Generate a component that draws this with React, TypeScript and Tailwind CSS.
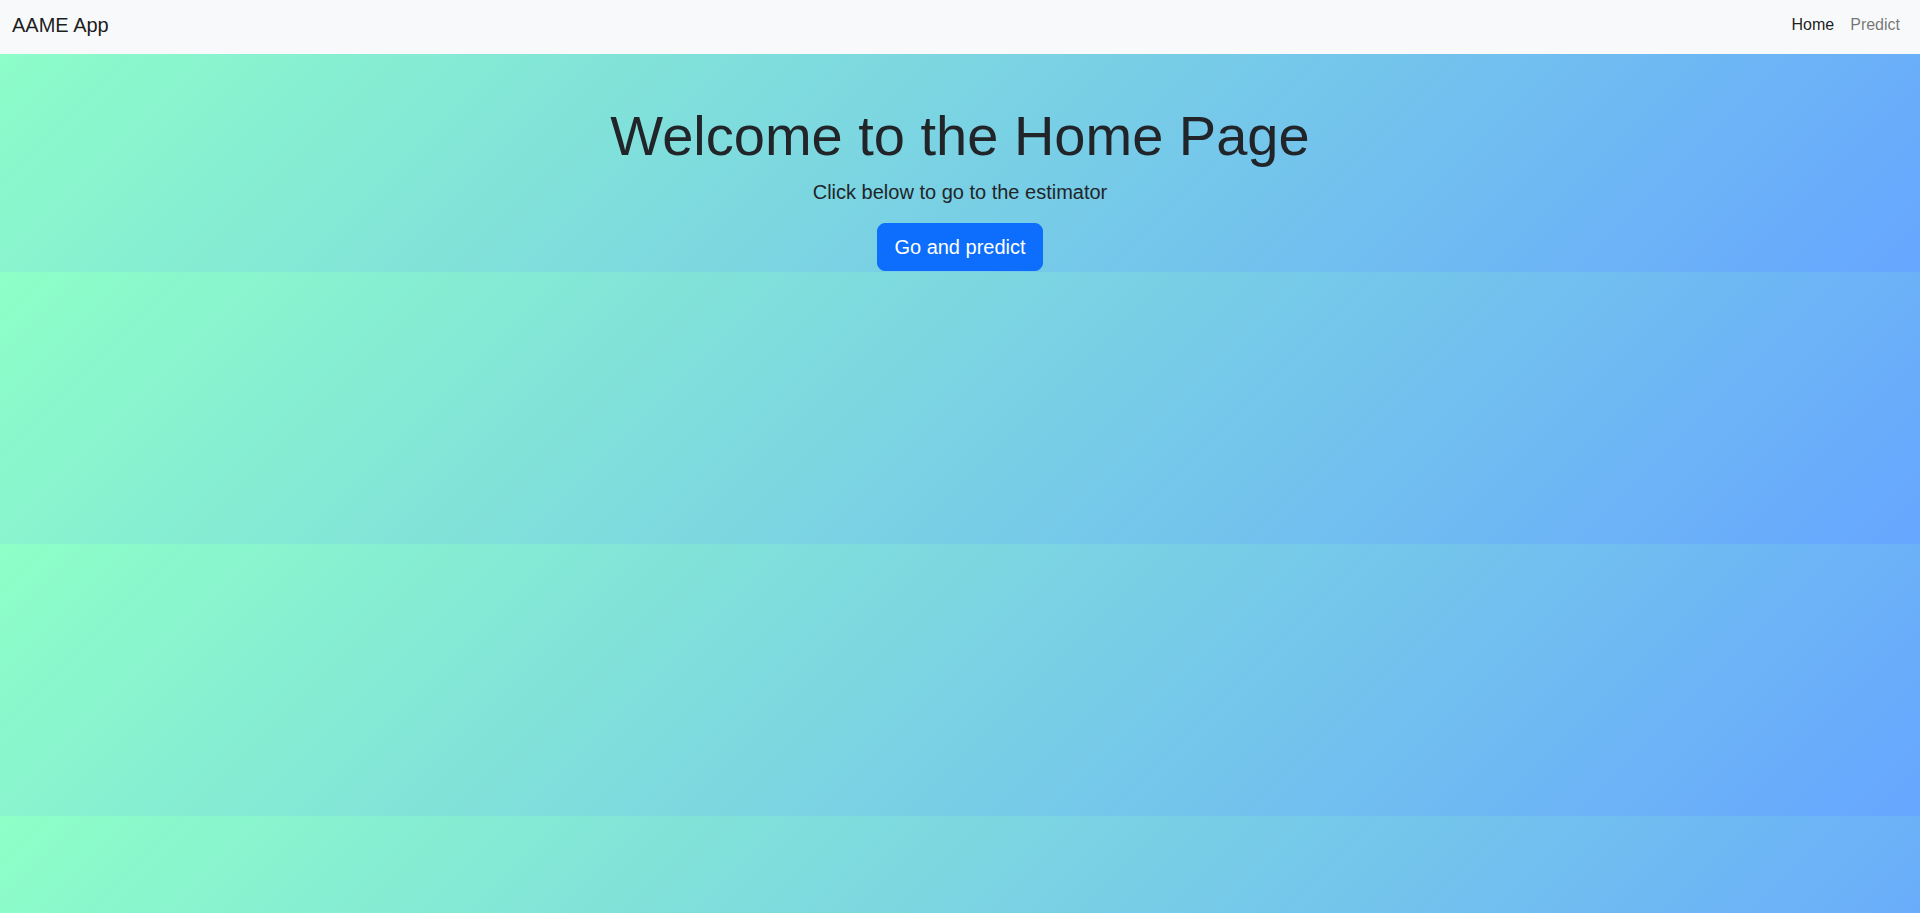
export default function App() {
  return (
    <div
      className="min-h-[913px] bg-[linear-gradient(135deg,#8effc7,#66a6ff)] bg-size-[100%_272px] bg-repeat text-[#212529]"
      style={{ fontFamily: '"Liberation Sans", Arial, sans-serif' }}
    >
      {/* ── Navbar ── */}
      <nav className="h-[54px] bg-[#f8f9fa] flex items-center justify-between px-3 pb-1">
        <a className="text-[20px] leading-[30px] text-black/90">AAME App</a>
        <div className="flex items-center">
          <a className="px-2 text-[16px] leading-6 text-black/90">Home</a>
          <a className="px-2 text-[16px] leading-6 text-black/55">Predict</a>
        </div>
      </nav>

      {/* ── Hero ── */}
      <div className="pt-12 flex flex-col items-center text-center">
        <h1 className="text-[56px] leading-[1.2] font-normal mb-2">Welcome to the Home Page</h1>
        <p className="text-[20px] leading-[30px] mb-4">Click below to go to the estimator</p>
        <button className="h-12 px-4 rounded-lg bg-[#0d6efd] border border-[#0d6efd] text-white text-[20px] leading-[30px]">
          Go and predict
        </button>
      </div>
    </div>
  )
}
